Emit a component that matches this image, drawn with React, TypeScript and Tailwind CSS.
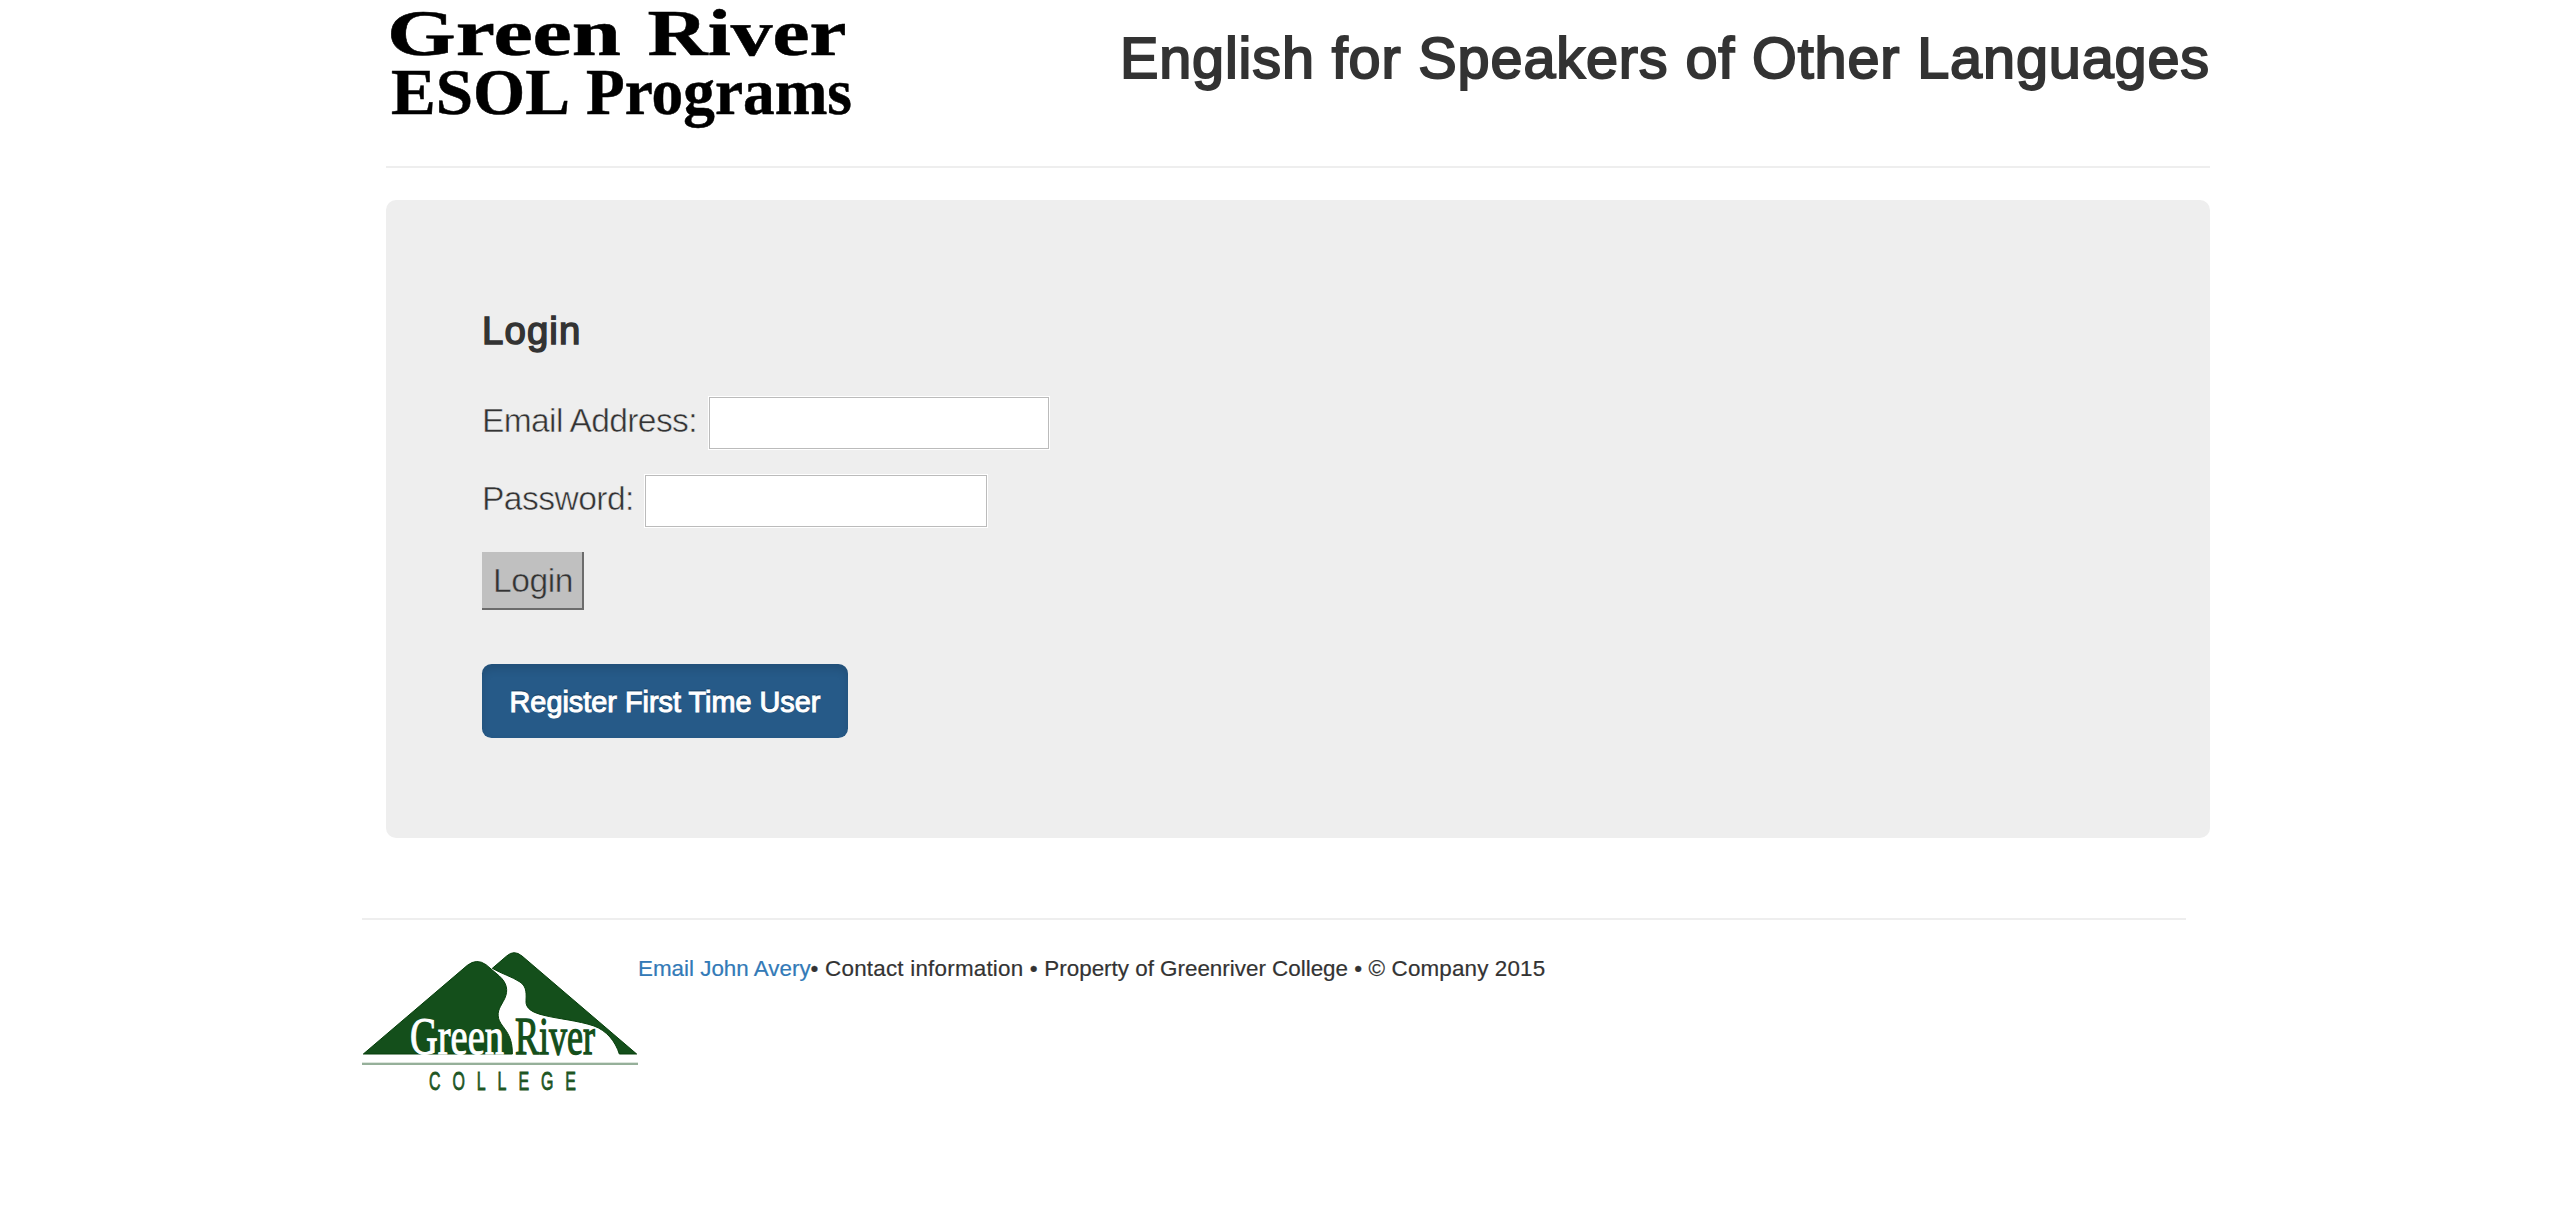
import React from "react";

function Wordmark() {
  return (
    <svg
      width="480"
      height="136"
      viewBox="386 0 480 136"
      className="block overflow-visible"
      fontFamily="'Liberation Serif', serif"
      fontWeight="700"
      fill="#000"
      stroke="#000"
      strokeWidth="0.5"
      aria-label="Green River ESOL Programs"
    >
      <text x="387" y="55" fontSize="66" textLength="234" lengthAdjust="spacingAndGlyphs">Green</text>
      <text x="647.5" y="55" fontSize="66" textLength="199" lengthAdjust="spacingAndGlyphs">River</text>
      <text x="391" y="113.5" fontSize="65" textLength="179" lengthAdjust="spacingAndGlyphs">ESOL</text>
      <text x="586" y="113.5" fontSize="65" textLength="266" lengthAdjust="spacingAndGlyphs">Programs</text>
    </svg>
  );
}

function CollegeLogo() {
  return (
    <svg width="276" height="140" viewBox="66 156 828 420" className="block shrink-0 overflow-visible" aria-label="Green River College">
      <g fill="#144f1b" stroke="#063f0b" strokeWidth="3" strokeLinejoin="round">
        <path d="M70 462 L382 196 Q410 174 438 194 L478 228 C500 248 506 270 494 296 C482 320 470 332 476 356 C484 384 518 396 517 462 Z" />
        <path d="M457 205 L500 168 Q522 148 546 168 L890 462 L838 462 C826 424 800 392 762 378 C716 362 650 356 612 346 C578 338 556 326 558 302 C560 270 556 258 540 246 C516 230 486 222 457 205 Z" />
      </g>
      <g fontFamily="'Liberation Serif', serif" fontSize="156">
        <text x="210" y="463" textLength="282" lengthAdjust="spacingAndGlyphs" fill="#fff" stroke="#fff" strokeWidth="3">Green</text>
        <text
          x="525"
          y="463"
          textLength="240"
          lengthAdjust="spacingAndGlyphs"
          fill="#144f1b"
          stroke="#144f1b"
          strokeWidth="4"
        >
          River
        </text>
      </g>
      <rect x="66" y="488" width="828" height="7" fill="#96b09a" />
      <g fontFamily="'Liberation Sans', sans-serif" fontSize="80" fill="#1d5624" stroke="#1d5624" strokeWidth="2.5">
        <text transform="translate(267 569) scale(0.6 1)" textLength="735" lengthAdjust="spacing">COLLEGE</text>
      </g>
    </svg>
  );
}

const light = "text-[33.6px] leading-[38px] [-webkit-text-stroke:0.5px_#eeeeee]";
const input = "block h-[54px] border border-white bg-[#bbbbbb] p-px outline-none";

function Field({ label, type, labelClass, boxClass }: { label: string; type: string; labelClass: string; boxClass: string }) {
  return (
    <label className="flex h-[54px] items-center">
      <span className={`${light} ${labelClass} shrink-0 whitespace-nowrap pb-[5px]`}>{label}</span>
      <span className={`${input} ${boxClass}`}>
        <input type={type} className="block h-full w-full bg-white px-2 text-[33.6px] outline-none" />
      </span>
    </label>
  );
}

export default function App() {
  return (
    <div className="min-h-[1216px] w-full bg-white pl-[362px] font-['Liberation_Sans',Arial,sans-serif] text-[#333333]">
      <div className="ml-6 w-[1824px]">
        <header className="flex h-[168px] items-start justify-between border-b-2 border-[#eeeeee]">
          <Wordmark />
          <h1 className="mt-[26px] whitespace-nowrap text-[57.6px] leading-[64px] tracking-[0.86px] [-webkit-text-stroke:2px_#333333]">
            English for Speakers of Other Languages
          </h1>
        </header>

        <main className="mt-8 h-[638px] rounded-[10px] bg-[#eeeeee] px-24 pt-[110px]">
          <h3 className="h-[42px] text-[38.4px] leading-[42px] tracking-[1.1px] [-webkit-text-stroke:1.5px_#333333]">Login</h3>
          <form className="mt-11" onSubmit={(e) => e.preventDefault()}>
            <div className="flex flex-col gap-6">
              <Field label="Email Address:" type="email" labelClass="w-[226px] tracking-[-0.65px]" boxClass="w-[342px]" />
              <Field label="Password:" type="password" labelClass="w-[162px] tracking-[-0.55px]" boxClass="w-[344px]" />
            </div>
            <button
              type="submit"
              className="mt-6 flex h-[58px] w-[102px] items-center justify-center border-b-2 border-r-2 border-[#6c6c6c] bg-[#c0c0c0] pl-0.5 pt-px"
            >
              <span className="text-[33.6px] leading-[38px] tracking-[-0.4px] [-webkit-text-stroke:0.5px_#c0c0c0]">Login</span>
            </button>
          </form>
          <a
            href="#"
            className="mt-[54px] flex h-[74px] w-[366px] items-center justify-center rounded-[9.6px] bg-[#265a88] pt-0.5 text-[28.8px] leading-[38px] tracking-[0.02px] text-white shadow-[inset_0_5px_8px_rgba(0,0,0,0.125)] [-webkit-text-stroke:1px_#ffffff] [text-shadow:0_-1.6px_0_rgba(0,0,0,0.2)]"
          >
            Register First Time User
          </a>
        </main>
      </div>

      <footer className="mt-20 flex w-[1824px] items-start border-t-2 border-[#eeeeee] pt-8">
        <CollegeLogo />
        <p className="whitespace-pre text-[22.4px] leading-[33px] [-webkit-text-stroke:0.2px]">
          <a href="#" className="text-[#337ab7]">Email John Avery</a>
          <span className="tracking-[0.22px]">• Contact information • </span>
          <span>Property of Greenriver College </span>
          <span className="tracking-[0.15px]">• © Company 2015</span>
        </p>
      </footer>
    </div>
  );
}
